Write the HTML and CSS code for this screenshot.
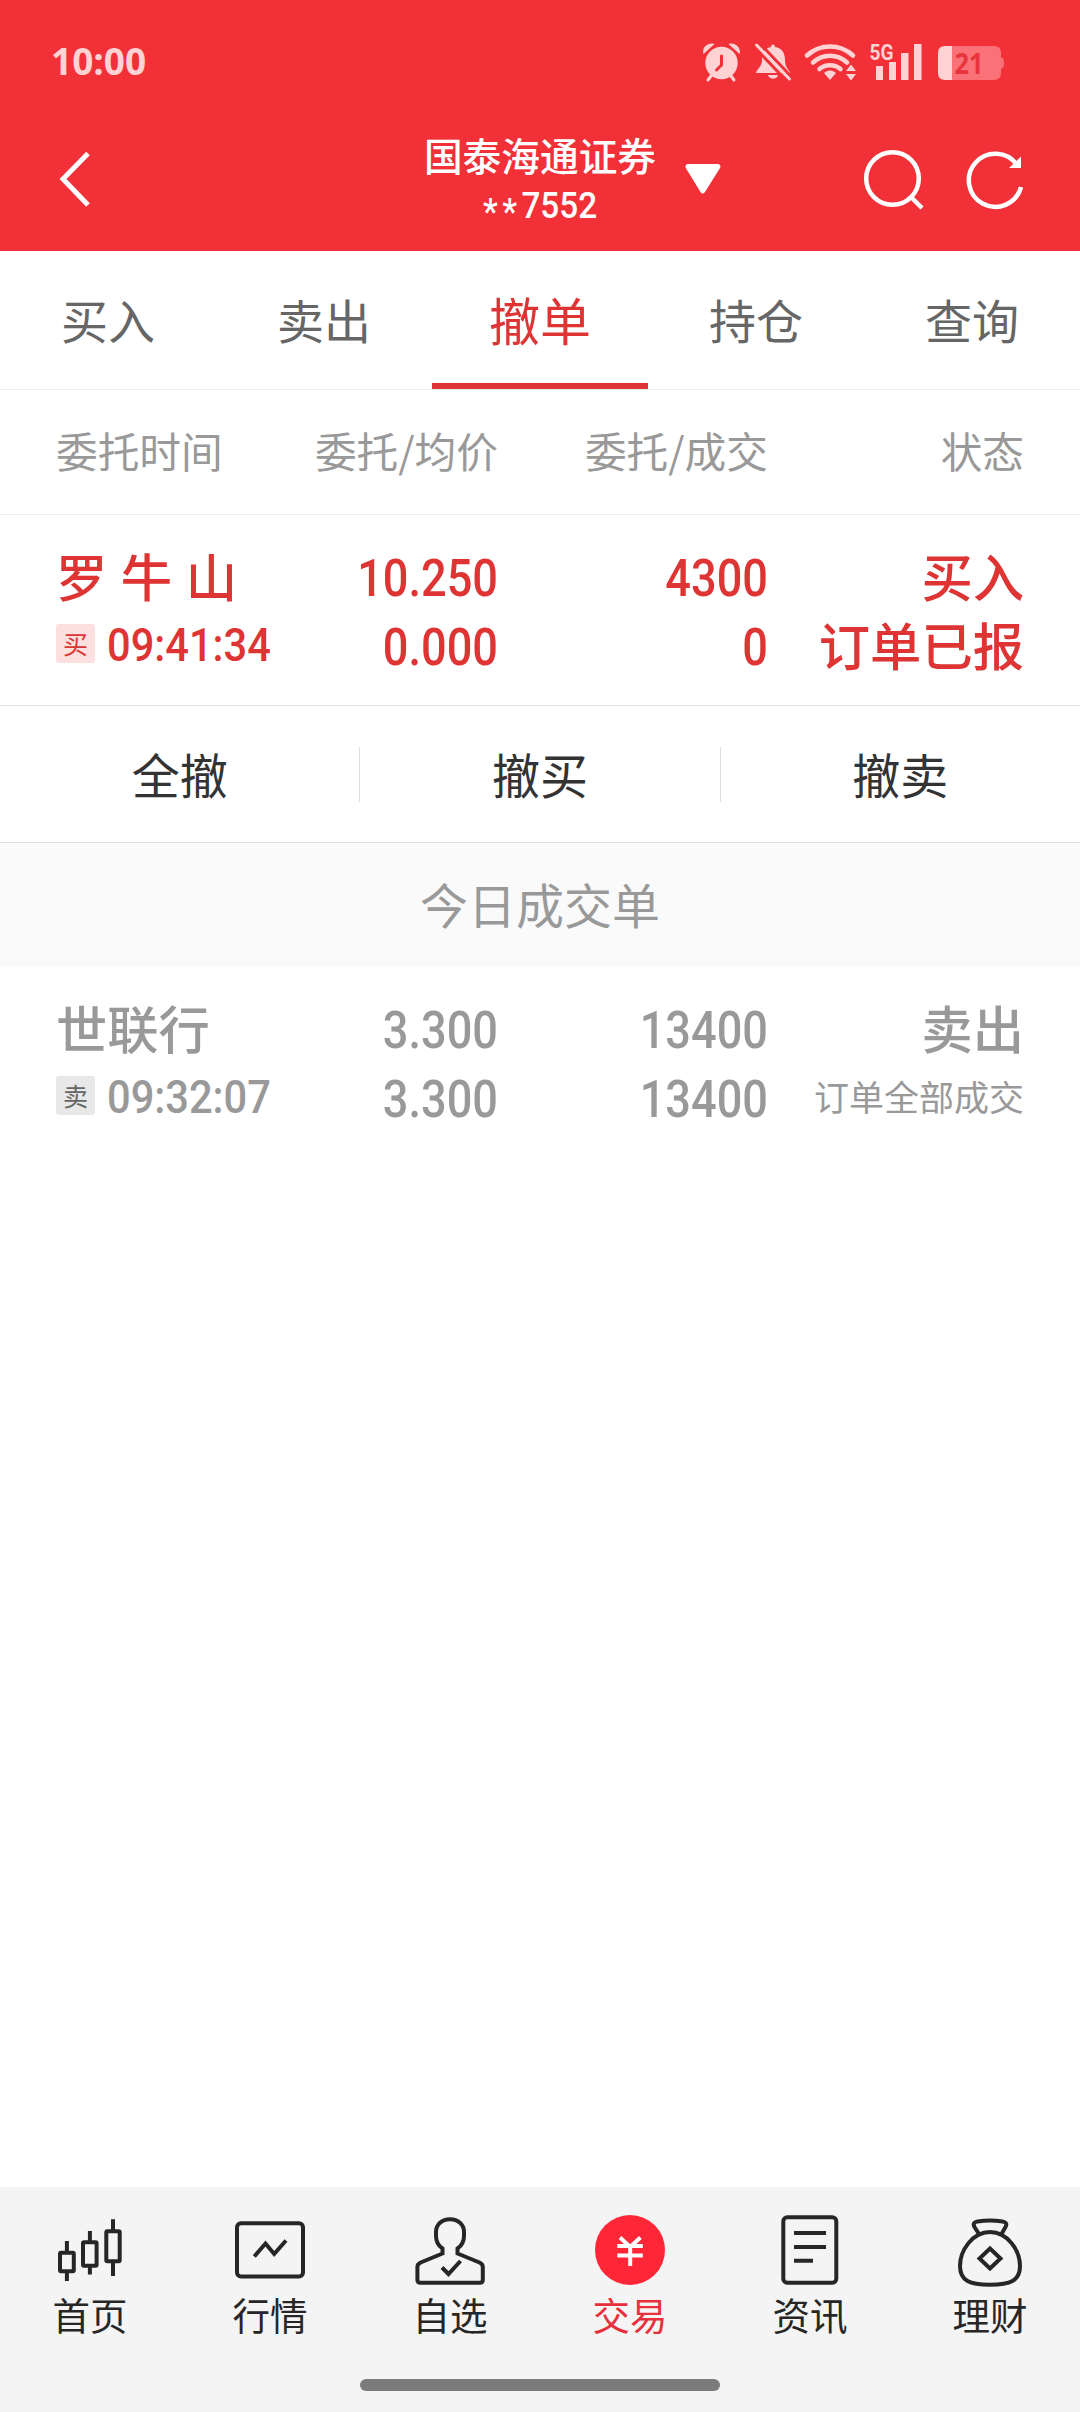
FILE: index.html
```
<!DOCTYPE html>
<html lang="zh-CN">
<head>
    <meta charset="UTF-8">
    <meta name="viewport" content="width=device-width, initial-scale=1.0">
    <title>撤单</title>
    <link rel="stylesheet" href="styles.css">
</head>
<body>
    <header>
        <div class="status-bar">
            <span class="clock">10:00</span>
            <svg class="status-icons" width="304" height="44" viewBox="702 40 304 44">
                <!-- alarm -->
                <circle cx="721.5" cy="63" r="16.2"/>
                <path d="M703.5 54c-2-6 4-12 11-10zM739.500 54c2-6-4-12-11-10z"/>
                <path class="line" d="M711 76l-3 4M731 76l3 4"/>
                <path class="cut" d="M721.500 56v9l-5 5"/>
                <!-- muted bell -->
                <path d="M773 44.500c1.200 0 2 1 2 2.500 7 1 10 6 10 13 0 8 4 9 5 13h-34c1-5 6-5 6-14 0-6 3-11 9-12 0-1.500.8-2.500 2-2.500zM768 75h10c-1 5-9 5-10 0z"/>
                <path class="cut wide" d="M753.500 46l34 36"/>
                <path class="cut wide" d="M759.500 43l33 35"/>
                <path class="line" d="M756.500 45l33 34"/>
                <!-- wifi -->
                <path class="arc" d="M807 55.500c13-12 33-12 46 0M813 62.500c10-9 24-9 34 0M819.500 69c6-5 15-5 21 0"/>
                <path d="M824 73c3-3.500 9-3.500 12 0l-6 7zM846 71l5-6.500 5 6.500zM846 74h10l-5 6.500z"/>
                <!-- signal -->
                <text class="net" x="869.5" y="60" textLength="24" lengthAdjust="spacingAndGlyphs">5G</text>
                <path d="M876 66h7v14h-7zM889 62h7v18h-7zM901 53h7.500v27h-7.500zM914 44h7.500v36h-7.500z"/>
                <!-- battery -->
                <path class="dim" d="M952 46h42q7 0 7 7v4q3 1 3 6t-3 6v4q0 7-7 7h-42z"/>
                <path d="M952 46h-7q-7 0-7 7v20q0 7 7 7h7z"/>
                <text class="level" x="954.500" y="74" textLength="29" lengthAdjust="spacingAndGlyphs">21</text>
            </svg>
        </div>
        <div class="title-bar">
            <svg class="back" width="40" height="64" viewBox="55 148 40 64"><path d="M88 153.500L63 179l25 26"/></svg>
            <div class="account">
                <h1>国泰海通证券</h1>
                <p><span class="mask">**</span>7552</p>
            </div>
            <svg class="caret" width="36" height="30" viewBox="0 0 36 30"><path d="M2.500 0h31q3 1 1.500 4L20 28q-2.500 3-4.500 0L.8 4Q-.5 1 2.500 0z"/></svg>
            <svg class="tools" width="166" height="64" viewBox="860 148 166 64">
                <circle cx="892.500" cy="178.500" r="26.300"/>
                <path d="M911 197l11 11"/>
                <path d="M1017 165A26.500 26.500 0 1 0 1021 187"/>
                <path class="tip" d="M1021 156.500v11.500h-12z"/>
            </svg>
        </div>
    </header>

    <nav class="tabs">
        <a>买入</a>
        <a>卖出</a>
        <a class="active">撤单</a>
        <a>持仓</a>
        <a>查询</a>
    </nav>

    <section class="orders">
        <div class="row head">
            <span>委托时间</span>
            <span>委托/均价</span>
            <span>委托/成交</span>
            <span>状态</span>
        </div>
        <div class="row order buy">
            <div>
                <p class="name">罗 牛 山</p>
                <p class="time"><span class="badge">买</span><span class="num small">09:41:34</span></p>
            </div>
            <div>
                <p class="num">10.250</p>
                <p class="num">0.000</p>
            </div>
            <div>
                <p class="num">4300</p>
                <p class="num">0</p>
            </div>
            <div>
                <p>买入</p>
                <p>订单已报</p>
            </div>
        </div>
    </section>

    <div class="actions">
        <button>全撤</button>
        <button>撤买</button>
        <button>撤卖</button>
    </div>

    <section class="deals">
        <h2>今日成交单</h2>
        <div class="row order sell">
            <div>
                <p class="name">世联行</p>
                <p class="time"><span class="badge">卖</span><span class="num small">09:32:07</span></p>
            </div>
            <div>
                <p class="num">3.300</p>
                <p class="num">3.300</p>
            </div>
            <div>
                <p class="num">13400</p>
                <p class="num">13400</p>
            </div>
            <div>
                <p>卖出</p>
                <p class="done">订单全部成交</p>
            </div>
        </div>
    </section>

    <footer>
        <nav class="bottom-nav">
            <a>
                <svg width="80" height="80" viewBox="0 0 80 80">
                    <rect x="10" y="42.700" width="13.800" height="18.600" rx="1"/>
                    <rect x="33" y="32.300" width="13.600" height="23.400" rx="1"/>
                    <rect x="56.300" y="21.300" width="13.400" height="30" rx="1"/>
                    <path d="M16.900 31v11M16.900 62v9M39.900 21v11M39.900 56v8.500M63 9.300v12M63 52v14"/>
                </svg>
                <span>首页</span>
            </a>
            <a>
                <svg width="80" height="80" viewBox="0 0 80 80">
                    <rect x="7" y="13.300" width="66" height="53.200" rx="4"/>
                    <path d="M24.300 46.500l11.200-13 8.700 10.500 11.800-13.500"/>
                </svg>
                <span>行情</span>
            </a>
            <a>
                <svg width="80" height="80" viewBox="0 0 80 80">
                    <path d="M47.500 43.500l22 9q3.300 1.500 3.300 4.500v13q0 2.700-3 2.700H10.400q-3 0-3-2.700V57q0-3 3.300-4.500l21.800-9v-5C28 35.500 26 31 26 26v-4c0-7.500 6-12.700 14-12.700S54 14.500 54 22v4c0 5-2 9.500-6.500 12.500z"/>
                    <path d="M32 57.500l6.500 6.500 12-13"/>
                </svg>
                <span>自选</span>
            </a>
            <a class="active">
                <svg width="80" height="80" viewBox="0 0 80 80">
                    <circle cx="40" cy="40" r="35"/>
                    <path d="M30 27.500l10.200 9.500 10.200-9.500M27.300 36h25.500M27.300 45.500h25.500M40.200 36v20"/>
                </svg>
                <span>交易</span>
            </a>
            <a>
                <svg width="80" height="80" viewBox="0 0 80 80">
                    <rect x="13.300" y="7.300" width="53" height="65.500" rx="4"/>
                    <path d="M24 23h32M24 37h32M24 50.700h19"/>
                </svg>
                <span>资讯</span>
            </a>
            <a>
                <svg width="80" height="80" viewBox="0 0 80 80">
                    <path d="M29 24l-4.500-7c-2-3.500 0-5 3-5.500q12.500-2 25 0c3 .5 5 2 3 5.500L51.500 24"/>
                    <path d="M40 22C22 22 10 41 10 56c0 15 10 18.700 30 18.700S70 71 70 56C70 41 58 22 40 22z"/>
                    <path d="M40 38.500L50.500 48.500 40 58.500 29.500 48.500z"/>
                </svg>
                <span>理财</span>
            </a>
        </nav>
        <div class="home-bar"></div>
    </footer>
</body>
</html>
```
FILE: styles.css
```
* {
    margin: 0;
    padding: 0;
    box-sizing: border-box;
}

body {
    display: flex;
    flex-direction: column;
    width: 1080px;
    height: 2412px;
    overflow: hidden;
    background-color: #fff;
    color: #333;
    font-family: "Noto Sans CJK SC", sans-serif;
}

svg {
    display: block;
    flex: none;
}

/* header */
header {
    height: 251px;
    background-color: #f23038;
    color: #fff;
}

.status-bar {
    display: flex;
    justify-content: space-between;
    align-items: center;
    height: 84px;
    padding: 40px 74px 0 51px;
}

.clock {
    color: #ffd2d4;
    font: 700 37px/42px "Open Sans", sans-serif;
    padding-bottom: 2px;
}

.status-icons {
    fill: #ffd2d4;
}

.status-icons .line,
.status-icons .cut,
.status-icons .arc {
    fill: none;
    stroke: #ffd2d4;
    stroke-width: 3;
    stroke-linecap: round;
}

.status-icons .cut {
    stroke: #f23038;
}

.status-icons .arc {
    stroke-width: 4.600;
}

.status-icons .dim {
    fill: #fa7278;
}

.net {
    font: 700 22px Roboto, sans-serif;
}

.level {
    fill: #e8353c;
    font: 700 29px "Open Sans", sans-serif;
}

.title-bar {
    display: grid;
    grid-template-columns: 365px 240px 36px 1fr 166px;
    align-items: center;
    height: 167px;
    padding: 0 54px 0 55px;
}

.back {
    margin-top: 25px;
    fill: none;
    stroke: #fff;
    stroke-width: 5;
}

.account {
    text-align: center;
    padding-top: 25px;
}

.account h1 {
    font-size: 38.700px;
    font-weight: 500;
    line-height: 50px;
    white-space: nowrap;
}

.account p {
    font: 500 37px/53px Roboto, sans-serif;
    transform: scaleX(0.9);
}

.mask {
    letter-spacing: 5px;
    vertical-align: -6px;
    line-height: 1;
}

.caret {
    margin: 22px 0 0 25px;
    fill: #fff;
}

.tools {
    grid-column: 5;
    margin-top: 25px;
    fill: none;
    stroke: #fff;
    stroke-width: 4.500;
}

.tools .tip {
    fill: #fff;
    stroke: none;
}

/* trade tabs */
.tabs {
    display: flex;
    height: 139px;
    border-bottom: 1px solid #ebebeb;
}

.tabs a {
    flex: 1;
    color: #666;
    font-size: 47px;
    line-height: 136px;
    text-align: center;
}

.tabs .active {
    border-bottom: 6px solid #de3434;
    color: #de3434;
    font-size: 51px;
}

/* order table */
.row {
    display: grid;
    grid-template-columns: 216px 226px 270px 256px;
    padding: 0 56px;
    text-align: right;
    white-space: nowrap;
}

.row > :first-child {
    text-align: left;
}

.head {
    height: 125px;
    border-bottom: 1px solid #ebebeb;
    color: #999;
    font-size: 41.700px;
    line-height: 121px;
}

.order {
    padding-top: 25px;
    font-size: 51.300px;
    font-weight: 500;
    line-height: 69px;
}

.order p {
    height: 69px;
}

.buy {
    height: 191px;
    border-bottom: 1px solid #e0e0e0;
    color: #de3434;
}

.sell {
    color: #999;
}

.name {
    word-spacing: 2px;
}

/* narrow figures */
.num {
    padding-top: 4px;
    font-family: Roboto, sans-serif;
    transform: scaleX(0.88);
    transform-origin: right;
}

.small {
    font-size: 46px;
    transform: scaleX(0.905);
    transform-origin: left;
}

.time {
    display: flex;
    align-items: center;
    gap: 12px;
}

.badge {
    flex: none;
    width: 39px;
    height: 39px;
    border-radius: 3px;
    background-color: #fce0e0;
    font-size: 25px;
    font-weight: 400;
    line-height: 38px;
    text-align: center;
}

.sell .badge {
    background-color: #e8e8e8;
    color: #666;
}

.done {
    font-size: 35px;
    font-weight: 400;
}

/* cancel buttons */
.actions {
    display: flex;
    align-items: center;
    height: 137px;
    border-bottom: 1px solid #e0e0e0;
}

.actions button {
    flex: 1;
    height: 55px;
    padding-bottom: 3px;
    border: none;
    background: none;
    color: #333;
    font: 400 48px/52px "Noto Sans CJK SC", sans-serif;
}

.actions button + button {
    border-left: 1px solid #ddd;
}

.deals h2 {
    height: 124px;
    background-color: #fafafa;
    color: #999;
    font-size: 48px;
    font-weight: 400;
    line-height: 121px;
    text-align: center;
}

/* bottom navigation */
footer {
    height: 225px;
    margin-top: auto;
    padding-top: 23px;
    background-color: #f4f4f4;
}

.bottom-nav {
    display: flex;
}

.bottom-nav a {
    flex: 1;
    display: flex;
    flex-direction: column;
    align-items: center;
    color: #262626;
    font-size: 37.500px;
    line-height: 48px;
}

.bottom-nav svg {
    fill: none;
    stroke: #262626;
    stroke-width: 4;
}

.bottom-nav .active {
    color: #e8303c;
}

.bottom-nav .active svg {
    stroke: #fff;
}

.bottom-nav circle {
    fill: #ff2638;
    stroke: none;
}

.home-bar {
    width: 360px;
    height: 12px;
    margin: 41px auto 0;
    border-radius: 6px;
    background-color: #7b7b7b;
}
```
